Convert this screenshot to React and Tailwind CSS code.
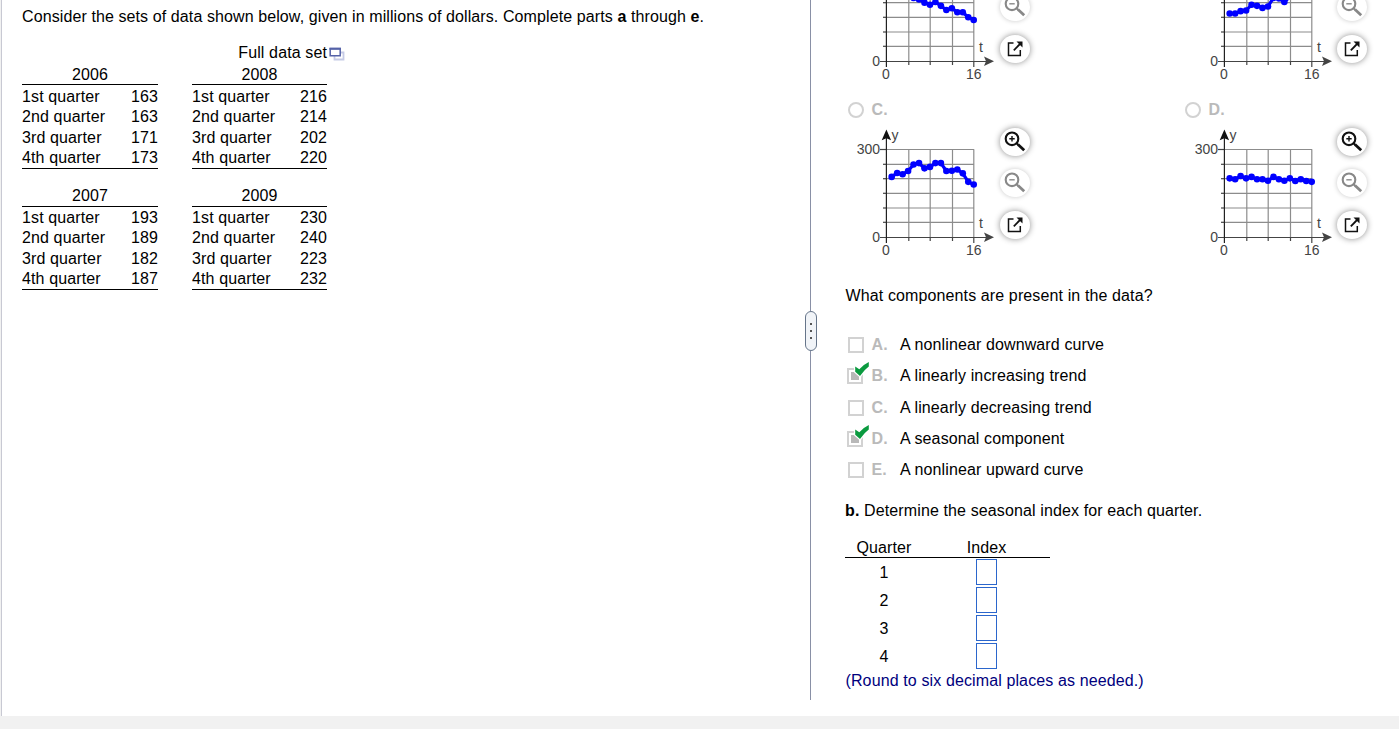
import clsx from "clsx";

const leftTables = [
  { year: "2006", values: [163, 163, 171, 173] },
  { year: "2007", values: [193, 189, 182, 187], compact: true },
];

const rightTables = [
  { year: "2008", values: [216, 214, 202, 220] },
  { year: "2009", values: [230, 240, 223, 232], compact: true },
];

const quarters = ["1st quarter", "2nd quarter", "3rd quarter", "4th quarter"];

// the first row is scrolled partly out of view, so only its lower half is shown
const charts = [
  {
    letter: "A.",
    scrolled: true,
    values: [240, 232, 235, 225, 216, 211, 200, 193, 202, 189, 175, 181, 167, 167, 150, 141],
  },
  {
    letter: "B.",
    scrolled: true,
    values: [163, 163, 171, 173, 193, 189, 182, 187, 216, 214, 202, 220, 230, 240, 223, 232],
  },
  {
    letter: "C.",
    values: [206, 219, 215, 226, 248, 253, 235, 240, 253, 253, 226, 227, 231, 218, 189, 180],
  },
  {
    letter: "D.",
    values: [201, 198, 209, 201, 206, 198, 198, 193, 206, 198, 193, 201, 192, 198, 192, 189],
  },
];

const components = [
  { letter: "A.", text: "A nonlinear downward curve", checked: false },
  { letter: "B.", text: "A linearly increasing trend", checked: true },
  { letter: "C.", text: "A linearly decreasing trend", checked: false },
  { letter: "D.", text: "A seasonal component", checked: true },
  { letter: "E.", text: "A nonlinear upward curve", checked: false },
];

function YearTable({ year, values, compact }) {
  return (
    <div>
      <div className={clsx("h-5 text-center", compact ? "leading-5" : "leading-[22px]")}>{year}</div>
      <div className={clsx("border-y border-black", compact ? "h-[84px] pt-px" : "h-[85px] pt-0.5")}>
        {values.map((value, i) => (
          <div key={i} className="flex h-[20.4px] justify-between leading-[20.4px]">
            <span>{quarters[i]}</span>
            <span>{value}</span>
          </div>
        ))}
      </div>
    </div>
  );
}

function PopupIcon() {
  return (
    <svg width="16" height="14" viewBox="0 0 16 14" className="mt-0.5 ml-0.5" fill="none">
      <path d="M5.5 5.5h9v7h-9z" stroke="#c6cbe6" strokeWidth="1.8" />
      <path d="M1.2 1.5h10v7.3h-10z" fill="#fff" stroke="#5562a8" strokeWidth="1.5" />
      <path d="M.5 1.8h11.5" stroke="#5562a8" strokeWidth="2" />
    </svg>
  );
}

function Chart({ values, scrolled, className }) {
  // plot area: 0..16 on t, 0..300 on y
  const points = values.map((v, i) => [35.2 + (i + 1) * 5.47, 110.3 - v * 0.2933]);

  return (
    <svg
      width="145"
      height="135"
      viewBox="0 0 145 135"
      className={clsx("shrink-0 tracking-normal", className)}
      fontFamily="Liberation Sans, Arial, sans-serif"
      fontSize="14"
      fill="#444"
    >
      <g stroke="#8c8c8c" strokeWidth="1.2">
        {[57.8, 79.2, 101.5, 122.8].map((x) => (
          <path key={x} d={`M${x} 22.3V110`} />
        ))}
        {[22.5, 37.3, 51.7, 66.3, 81, 95.3].map((y) => (
          <path key={y} d={`M35 ${y}H123`} />
        ))}
      </g>
      <g stroke="#444" strokeWidth="1.2">
        {[57.8, 79.2, 101.5, 122.8].map((x) => (
          <path key={x} d={`M${x} 110V${x > 120 ? 116 : 114}`} />
        ))}
        {[22.5, 37.3, 51.7, 66.3, 81, 95.3].map((y) => (
          <path key={y} d={`M${y < 30 ? 29 : 32} ${y}H35`} />
        ))}
        <path d="M29 110.5H136" />
        <path d="M35.4 10V116" stroke="#222" />
      </g>
      <path d="M35.4 2.5l4.7 10.7-4.7-2-4.7 2z" fill="#111" />
      <path d="M143 110.3l-10 4.7 2-4.7-2-4.7z" />
      <polyline points={points.join(" ")} fill="none" stroke="#00f" strokeWidth="3.2" />
      {points.map(([x, y]) => (
        <circle key={x} cx={x} cy={y} r="3.3" fill="#00f" />
      ))}
      {!scrolled && (
        <>
          <text x="40.5" y="13">y</text>
          <text x="29" y="27" textAnchor="end">300</text>
        </>
      )}
      <text x="128" y="100.5">t</text>
      <text x="29" y="115" textAnchor="end">0</text>
      <text x="35" y="128" textAnchor="middle">0</text>
      <text x="122.7" y="128" textAnchor="middle">16</text>
    </svg>
  );
}

function RoundButton({ disabled, children }) {
  return (
    <button
      disabled={disabled}
      className={clsx(
        "h-7 w-[30px] rounded-[50%] bg-white",
        disabled
          ? "shadow-[0_0_5px_rgba(0,0,0,0.22)]"
          : "shadow-[0_0_6px_rgba(0,0,0,0.45)]"
      )}
    >
      <svg width="30" height="28" viewBox="0 0 30 28" fill="none" stroke={disabled ? "#888" : "#111"}>
        {children}
      </svg>
    </button>
  );
}

function Magnifier({ plus }) {
  return (
    <>
      <circle cx="12" cy="10.8" r="6.3" strokeWidth="2.1" />
      <path d="M16.6 15.3l1.7 1.7" strokeWidth="2" />
      <path d="M18 16.5l6.2 5.8" strokeWidth="2.8" />
      <path d={plus ? "M9.3 10.8h5.4M12 8.1v5.4" : "M9.3 10.8h5.4"} strokeWidth="1.4" />
    </>
  );
}

function ChartChoice({ letter, values, scrolled, shifted }) {
  return (
    <div className="h-44 w-[337px]">
      <div className="flex h-[26px] items-center pl-[3px]">
        {!scrolled && (
          <>
            <span className="size-4 rounded-full border-2 border-[#d2d2d2]" />
            <span className="ml-[7.5px] font-bold text-[#bababa]">{letter}</span>
          </>
        )}
      </div>
      <div className="flex pt-1 pl-1.5">
        <Chart values={values} scrolled={scrolled} className={shifted ? "ml-px" : ""} />
        <div className={clsx("flex flex-col gap-[13.5px] pt-[0.5px]", shifted ? "ml-[3px]" : "ml-1")}>
          <RoundButton>
            <Magnifier plus />
          </RoundButton>
          <RoundButton disabled>
            <Magnifier />
          </RoundButton>
          <RoundButton>
            <path d="M13.5 8H8.5V20.5H20.3V15" strokeWidth="1.5" />
            <path d="M13.8 15.3L20.5 8.5" strokeWidth="1.8" />
            <path d="M16.5 6.5h6v6z" fill="#111" stroke="none" />
          </RoundButton>
        </div>
      </div>
    </div>
  );
}

function Checkbox({ checked }) {
  if (!checked) {
    return <span className="ml-px size-4 border-2 border-[#d2d2d2]" />;
  }
  return (
    <span className="relative size-4 border-2 border-[#d2d2d2] p-0.5">
      <span className="block size-full bg-[#b8b8b8]" />
      <svg width="18" height="17" viewBox="0 0 18 17" className="absolute -top-[9px] left-[4px]">
        <path d="M2.2 5.5L6.3 8.3Q10 3.8 15.8 1V5.5Q11.5 8.5 7 15L2.2 10.8Z" fill="#fff" stroke="#fff" strokeWidth="2.5" />
        <path d="M2.2 5.5L6.3 8.3Q10 3.8 15.8 1V5.5Q11.5 8.5 7 15L2.2 10.8Z" fill="#0a9a3f" />
      </svg>
    </span>
  );
}

export default function App() {
  return (
    <div className="h-[729px] w-[1399px] overflow-hidden bg-[#f1f1f1] font-['Liberation_Sans',Arial,sans-serif] text-base tracking-[0.12px] text-black">
      <main className="ml-px flex h-[716px] border-l border-[#c8c9d3] bg-white">
        {/* Problem statement */}
        <section className="w-[803px] pl-5">
          <p className="pt-[5px] leading-6 tracking-[0.1px]">
            Consider the sets of data shown below, given in millions of dollars. Complete parts{" "}
            <b>a</b> through <b>e</b>.
          </p>
          <div className="mt-3 flex h-[23px] w-[323px] items-center justify-end">
            Full data set
            <PopupIcon />
          </div>
          <div className="flex gap-[34px]">
            <div className="flex w-[136px] flex-col gap-[17px]">
              {leftTables.map((table) => (
                <YearTable key={table.year} {...table} />
              ))}
            </div>
            <div className="flex w-[135px] flex-col gap-[17px]">
              {rightTables.map((table) => (
                <YearTable key={table.year} {...table} />
              ))}
            </div>
          </div>
        </section>

        {/* Resizable divider */}
        <div className="flex h-[700px] w-3 flex-col">
          <div className="ml-[5px] h-[311px] w-px bg-[#8990a6]" />
          <div className="flex h-10 w-3 flex-col items-center justify-center gap-[5px] rounded-full border border-[#66758a] bg-[#f1f4f8]">
            <i className="size-0.5 bg-[#555]" />
            <i className="size-0.5 bg-[#555]" />
            <i className="size-0.5 bg-[#555]" />
          </div>
          <div className="ml-[5px] w-px grow bg-[#8990a6]" />
        </div>

        {/* Answer area */}
        <section className="h-full flex-1 overflow-hidden pl-7">
          <div className="-mt-[79px] flex w-[674px] flex-wrap">
            {charts.map((chart, i) => (
              <ChartChoice key={chart.letter} {...chart} shifted={i % 2 === 1} />
            ))}
          </div>

          <p className="mt-[11px] pl-[0.5px] leading-6">What components are present in the data?</p>

          <div className="mt-[21.4px]">
            {components.map(({ letter, text, checked }) => (
              <div key={letter} className="flex h-[31.25px] items-center">
                <div className="flex w-[26.5px] pl-0.5">
                  <Checkbox checked={checked} />
                </div>
                <span className="w-[28.5px] font-bold text-[#bababa]">{letter}</span>
                <span>{text}</span>
              </div>
            ))}
          </div>

          <p className="mt-[13.6px] leading-6">
            <b>b.</b> Determine the seasonal index for each quarter.
          </p>

          <div className="mt-[13px] w-[205px]">
            <div className="flex h-[22px] border-b border-black leading-[24px]">
              <span className="w-[78px] text-center">Quarter</span>
              <span className="ml-[26px] w-[75px] text-center">Index</span>
            </div>
            {[1, 2, 3, 4].map((n) => (
              <div key={n} className="flex h-7 items-center">
                <span className="w-[78px] pt-0.5 text-center">{n}</span>
                <input className="ml-[53px] h-[26px] w-[21px] border border-[#2b66cc]" />
              </div>
            ))}
          </div>
          <p className="-mt-px pl-[0.5px] leading-6 text-[#00007d]">
            (Round to six decimal places as needed.)
          </p>
        </section>
      </main>
    </div>
  );
}
